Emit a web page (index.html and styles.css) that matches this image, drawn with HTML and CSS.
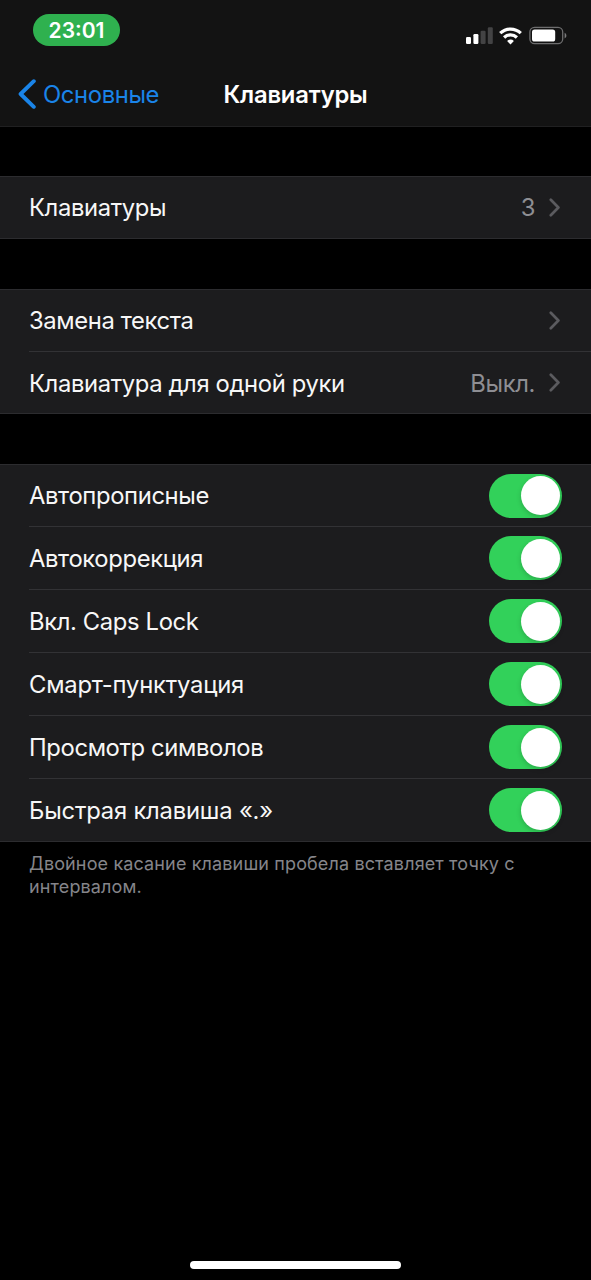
FILE: index.html
```html
<!DOCTYPE html>
<html lang="ru">
<head>
<meta charset="utf-8">
<title>Клавиатуры</title>
<link rel="stylesheet" href="styles.css">
</head>
<body>
<svg class="sprite" width="0" height="0" aria-hidden="true">
  <symbol id="chevron" viewBox="0 0 12 19"><path d="M1.8 1.8 9.4 9.5 1.8 17.2" fill="none" stroke="currentColor" stroke-width="2.7" stroke-linecap="round" stroke-linejoin="round"/></symbol>
</svg>
<header class="header">
  <div class="status">
    <div class="clock">23:01</div>
    <svg class="indicators" width="101" height="20" viewBox="0 0 101 20">
      <rect x="0" y="11" width="5" height="7" rx="1.2" fill="#fff"/>
      <rect x="7.4" y="8" width="5" height="10" rx="1.2" fill="#fff"/>
      <rect x="14.6" y="4.8" width="5" height="13.2" rx="1.2" fill="#434344"/>
      <rect x="21.8" y="1.2" width="5" height="16.8" rx="1.2" fill="#434344"/>
      <g fill="none" stroke="#fff" stroke-width="3.2">
        <path d="M34.2 7.2a14.8 14.8 0 0 1 20.6 0"/>
        <path d="M38.1 11.5a9.2 9.2 0 0 1 12.8 0"/>
      </g>
      <path d="M44.5 18.4l-3.4-3.4a4.8 4.8 0 0 1 6.8 0z" fill="#fff"/>
      <rect x="63.9" y="1.3" width="32.8" height="16.4" rx="4.7" fill="none" stroke="#6d6d6e" stroke-width="1.3"/>
      <rect x="66" y="3.4" width="23.2" height="12.2" rx="2.6" fill="#fff"/>
      <path d="M98.6 6.8c2.4 1 2.4 4.6 0 5.6z" fill="#7a7a7b"/>
    </svg>
  </div>
  <nav class="nav">
    <div class="back">
      <svg class="back-icon" width="19" height="32" viewBox="0 0 19 32"><path d="M15.8 3.2 2.6 16 15.8 28.8" fill="none" stroke="currentColor" stroke-width="3.9" stroke-linecap="round" stroke-linejoin="round"/></svg>
      <span class="back-label">Основные</span>
    </div>
    <h1 class="title">Клавиатуры</h1>
  </nav>
</header>
<main>
  <section class="group">
    <div class="row"><span class="label">Клавиатуры</span><span class="value">3</span><svg class="chevron"><use href="#chevron"/></svg></div>
  </section>
  <section class="group group-links">
    <div class="row"><span class="label">Замена текста</span><svg class="chevron"><use href="#chevron"/></svg></div>
    <div class="row"><span class="label">Клавиатура для одной руки</span><span class="value">Выкл.</span><svg class="chevron"><use href="#chevron"/></svg></div>
  </section>
  <section class="group">
    <div class="row"><span class="label">Автопрописные</span><span class="switch"></span></div>
    <div class="row"><span class="label">Автокоррекция</span><span class="switch"></span></div>
    <div class="row"><span class="label">Вкл. Caps Lock</span><span class="switch"></span></div>
    <div class="row"><span class="label label-wide">Смарт-пунктуация</span><span class="switch"></span></div>
    <div class="row"><span class="label">Просмотр символов</span><span class="switch"></span></div>
    <div class="row"><span class="label label-wide">Быстрая клавиша «.»</span><span class="switch"></span></div>
  </section>
  <p class="note">Двойное касание клавиши пробела вставляет точку с интервалом.</p>
</main>
<div class="home"></div>
</body>
</html>
```
FILE: styles.css
```css
* { box-sizing: border-box; }
body {
  margin: 0;
  height: 1280px;
  display: flex;
  flex-direction: column;
  background: #000;
  color: #f7f7f7;
  font: 400 23.8px/30px Inter, "Noto Sans", sans-serif;
  letter-spacing: -.37px;
  overflow: hidden;
}
.sprite { display: none; }
.header {
  height: 127px;
  background: #131313;
  border-bottom: 1px solid #202021;
}
.status {
  display: flex;
  justify-content: space-between;
  padding: 14px 24px 0 33px;
}
.clock {
  width: 87px;
  height: 32px;
  border-radius: 16px;
  background: #2fb14f;
  color: #fff;
  font-size: 21px;
  font-weight: 600;
  letter-spacing: 0;
  line-height: 33px;
  text-align: center;
}
.indicators { margin-top: 12px; }
.nav {
  display: grid;
  grid-template-columns: 1fr auto 1fr;
  height: 32px;
  margin-top: 32px;
  padding: 0 18px;
  line-height: 33px;
}
.back { display: flex; gap: 6px; color: #1a84e8; }
.title {
  margin: 0;
  font-size: 23.8px;
  font-weight: 600;
  letter-spacing: -.2px;
  color: #fff;
}
.group {
  margin-top: 50px;
  background: #1c1c1e;
  border-top: 1px solid #2c2c2f;
  border-bottom: 1px solid #2c2c2f;
}
.group:first-child { margin-top: 49px; }
.row {
  display: flex;
  align-items: center;
  height: 61px;
  margin-left: 29px;
  padding-right: 29px;
}
.row + .row { height: 63px; border-top: 1px solid #323235; }
.row + .row .label, .row + .row .value { padding-top: 2px; }
.group-links .row + .row { height: 62px; }
.label { flex: 1; white-space: nowrap; }
.label-wide { letter-spacing: -.2px; }
.value { color: #8e8e93; margin-right: 14px; }
.chevron { width: 12px; height: 19px; margin-right: 1px; color: #5b5b5f; }
.switch {
  width: 73px;
  height: 44px;
  padding: 2.5px;
  border-radius: 22px;
  background: #32d15a;
}
.switch::after {
  content: "";
  display: block;
  width: 39px;
  height: 39px;
  margin-left: 29px;
  border-radius: 50%;
  background: #fff;
  box-shadow: 0 2px 5px rgba(0, 0, 0, .18);
}
.note {
  margin: 10px 60px 0 29px;
  color: #85858a;
  font-size: 18px;
  letter-spacing: .13px;
  line-height: 23px;
}
.home {
  width: 211px;
  height: 8px;
  margin: auto auto 11px 190px;
  border-radius: 4px;
  background: #fff;
}
```
